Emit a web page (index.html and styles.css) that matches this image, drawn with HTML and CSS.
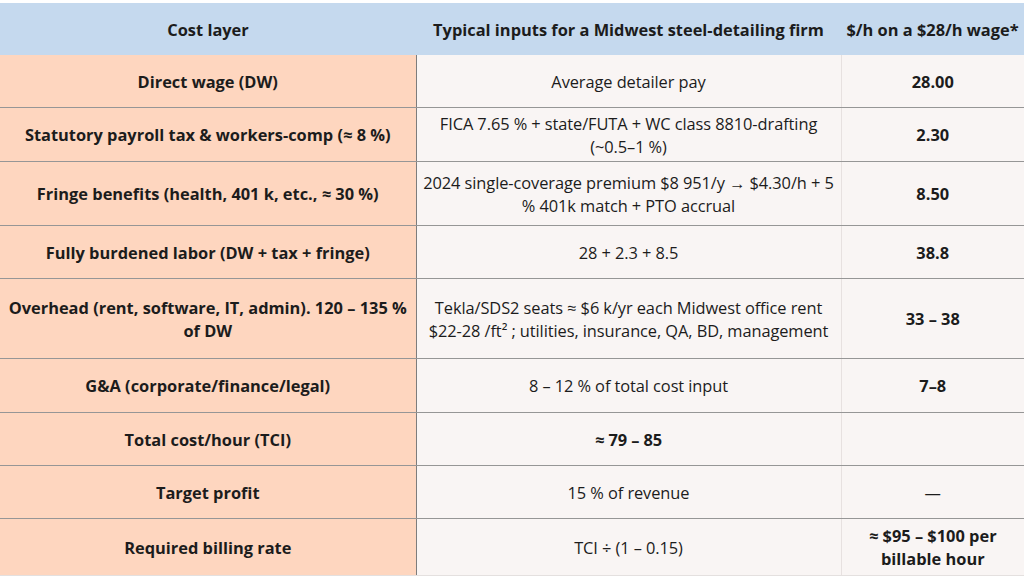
FILE: index.html
```html
<!DOCTYPE html>
<html lang="en">
<head>
<meta charset="utf-8">
<title>Cost layers</title>
<link rel="stylesheet" href="styles.css">
</head>
<body>
<div class="wrap">
<table class="cost">
  <colgroup>
    <col class="c1"><col class="c2"><col class="c3">
  </colgroup>
  <thead>
    <tr class="head">
      <th>Cost layer</th>
      <th>Typical inputs for a Midwest steel-detailing firm</th>
      <th>$/h on a $28/h wage*</th>
    </tr>
  </thead>
  <tbody>
    <tr class="r1">
      <td class="layer">Direct wage (DW)</td>
      <td class="input">Average detailer pay</td>
      <td class="val">28.00</td>
    </tr>
    <tr class="r2">
      <td class="layer">Statutory payroll tax &amp; workers-comp (≈ 8 %)</td>
      <td class="input">FICA 7.65 % + state/FUTA + WC class 8810-drafting (~0.5–1 %)</td>
      <td class="val">2.30</td>
    </tr>
    <tr class="r3">
      <td class="layer">Fringe benefits (health, 401 k, etc., ≈ 30 %)</td>
      <td class="input">2024 single-coverage premium $8 951/y → $4.30/h + 5 % 401k match + PTO accrual</td>
      <td class="val">8.50</td>
    </tr>
    <tr class="r4">
      <td class="layer">Fully burdened labor (DW + tax + fringe)</td>
      <td class="input">28 + 2.3 + 8.5</td>
      <td class="val">38.8</td>
    </tr>
    <tr class="r5">
      <td class="layer">Overhead (rent, software, IT, admin). 120 – 135 % of DW</td>
      <td class="input">Tekla/SDS2 seats ≈ $6 k/yr each Midwest office rent $22-28 /ft² ; utilities, insurance, QA, BD, management</td>
      <td class="val">33 – 38</td>
    </tr>
    <tr class="r6">
      <td class="layer">G&amp;A (corporate/finance/legal)</td>
      <td class="input">8 – 12 % of total cost input</td>
      <td class="val">7–8</td>
    </tr>
    <tr class="r7">
      <td class="layer">Total cost/hour (TCI)</td>
      <td class="input strong">≈ 79 – 85</td>
      <td class="val"></td>
    </tr>
    <tr class="r8">
      <td class="layer">Target profit</td>
      <td class="input">15 % of revenue</td>
      <td class="val dash">—</td>
    </tr>
    <tr class="r9">
      <td class="layer">Required billing rate</td>
      <td class="input">TCI ÷ (1 – 0.15)</td>
      <td class="val">≈ $95 – $100 per billable hour</td>
    </tr>
  </tbody>
</table>
</div>
</body>
</html>
```

FILE: styles.css
```css
html, body {
  margin: 0;
  padding: 0;
  background: #ffffff;
}

body {
  font-family: "Open Sans", "Liberation Sans", sans-serif;
  color: #1c1c1c;
  width: 1024px;
  height: 576px;
  overflow: hidden;
}

.wrap {
  padding-top: 3px;
}

.cost {
  width: 1024px;
  table-layout: fixed;
  border-collapse: collapse;
  border-spacing: 0;
  font-size: 16.4px;
  line-height: 23px;
}

.c1 { width: 416px; }
.c2 { width: 425px; }
.c3 { width: 183px; }

.cost th,
.cost td {
  text-align: center;
  vertical-align: middle;
  padding: 0 6px;
}

.head th {
  background: #c5d9ee;
  font-weight: 700;
  height: 52px;
  border: none;
  padding: 0;
  white-space: nowrap;
}

.cost tbody td {
  border-bottom: 1px solid #969696;
}

.layer {
  background: #fed6bf;
  font-weight: 700;
  border-right: 1px solid #7d7d7d;
  padding: 0 6px;
}

.cost .input {
  background: #f9f5f4;
  font-weight: 400;
  border-right: 1px solid #e7e1e0;
  padding: 0;
  letter-spacing: -0.08px;
}

.input.strong {
  font-weight: 700;
}

.val {
  background: #f9f5f4;
  font-weight: 700;
}

.val.dash {
  font-weight: 400;
}

.r1 td { height: 52px; }
.r2 td { height: 53px; }
.r3 td { height: 63px; }
.r4 td { height: 52px; }
.r5 td { height: 79px; }
.r6 td { height: 53px; }
.r7 td { height: 52px; }
.r8 td { height: 52px; }
.r9 td { height: 56px; }

.cost tbody .r9 td {
  border-bottom: 1px solid #e4e0df;
}
```
